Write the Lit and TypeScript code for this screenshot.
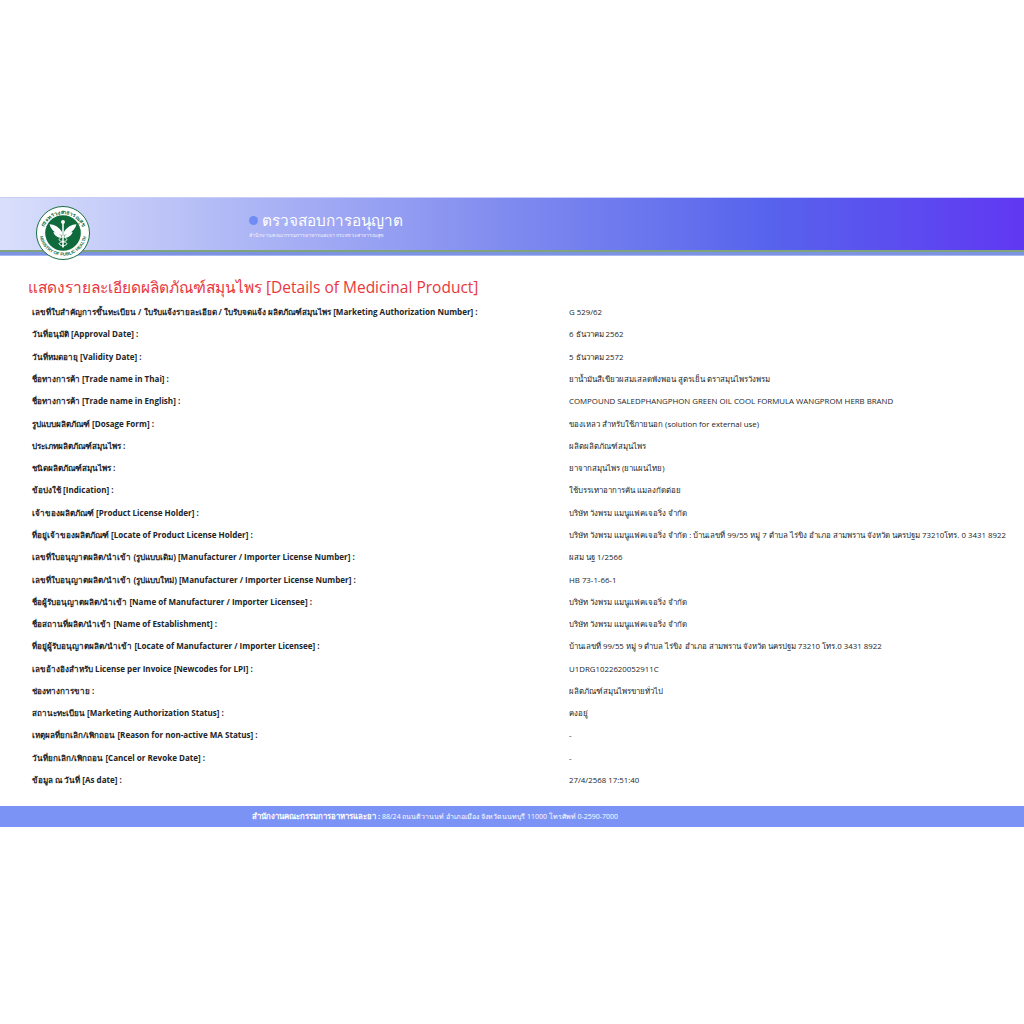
import { LitElement, html, css } from "lit";
import { customElement } from "lit/decorators.js";

const rows: [string, string][] = [
  ["เลขที่ใบสำคัญการขึ้นทะเบียน / ใบรับแจ้งรายละเอียด / ใบรับจดแจ้ง ผลิตภัณฑ์สมุนไพร [Marketing Authorization Number] :", "G 529/62"],
  ["วันที่อนุมัติ [Approval Date] :", "6 ธันวาคม 2562"],
  ["วันที่หมดอายุ [Validity Date] :", "5 ธันวาคม 2572"],
  ["ชื่อทางการค้า [Trade name in Thai] :", "ยาน้ำมันสีเขียวผสมเสลดพังพอน สูตรเย็น ตราสมุนไพรวังพรม"],
  ["ชื่อทางการค้า [Trade name in English] :", "COMPOUND SALEDPHANGPHON GREEN OIL COOL FORMULA WANGPROM HERB BRAND"],
  ["รูปแบบผลิตภัณฑ์ [Dosage Form] :", "ของเหลว สำหรับใช้ภายนอก (solution for external use)"],
  ["ประเภทผลิตภัณฑ์สมุนไพร :", "ผลิตผลิตภัณฑ์สมุนไพร"],
  ["ชนิดผลิตภัณฑ์สมุนไพร :", "ยาจากสมุนไพร (ยาแผนไทย)"],
  ["ข้อบ่งใช้ [Indication] :", "ใช้บรรเทาอาการคัน แมลงกัดต่อย"],
  ["เจ้าของผลิตภัณฑ์ [Product License Holder] :", "บริษัท วังพรม แมนูแฟคเจอริ่ง จำกัด"],
  ["ที่อยู่เจ้าของผลิตภัณฑ์ [Locate of Product License Holder] :", "บริษัท วังพรม แมนูแฟคเจอริ่ง จำกัด : บ้านเลขที่ 99/55 หมู่ 7 ตำบล ไร่ขิง อำเภอ สามพราน จังหวัด นครปฐม 73210โทร. 0 3431 8922"],
  ["เลขที่ใบอนุญาตผลิต/นำเข้า (รูปแบบเดิม) [Manufacturer / Importer License Number] :", "ผสม นฐ 1/2566"],
  ["เลขที่ใบอนุญาตผลิต/นำเข้า (รูปแบบใหม่) [Manufacturer / Importer License Number] :", "HB 73-1-66-1"],
  ["ชื่อผู้รับอนุญาตผลิต/นำเข้า [Name of Manufacturer / Importer Licensee] :", "บริษัท วังพรม แมนูแฟคเจอริ่ง จำกัด"],
  ["ชื่อสถานที่ผลิต/นำเข้า [Name of Establishment] :", "บริษัท วังพรม แมนูแฟคเจอริ่ง จำกัด"],
  ["ที่อยู่ผู้รับอนุญาตผลิต/นำเข้า [Locate of Manufacturer / Importer Licensee] :", "บ้านเลขที่ 99/55 หมู่ 9 ตำบล ไร่ขิง อำเภอ สามพราน จังหวัด นครปฐม 73210 โทร.0 3431 8922"],
  ["เลขอ้างอิงสำหรับ License per Invoice [Newcodes for LPI] :", "U1DRG1022620052911C"],
  ["ช่องทางการขาย :", "ผลิตภัณฑ์สมุนไพรขายทั่วไป"],
  ["สถานะทะเบียน [Marketing Authorization Status] :", "คงอยู่"],
  ["เหตุผลที่ยกเลิก/เพิกถอน [Reason for non-active MA Status] :", "-"],
  ["วันที่ยกเลิก/เพิกถอน [Cancel or Revoke Date] :", "-"],
  ["ข้อมูล ณ วันที่ [As date] :", "27/4/2568 17:51:40"],
];

@customElement("app-root")
export class AppRoot extends LitElement {
  static styles = css`
    :host {
      display: block;
      padding-top: 197px;
      background: #fff;
      font-family: "Open Sans", "Noto Sans", "Liberation Sans", sans-serif;
      color: #212529;
    }
    .banner {
      height: 52px;
      border-top: 1px solid #c9cef6;
      display: flex;
      align-items: flex-start;
      background: linear-gradient(90deg, #d9dffb 0%, #7f8aef 50%, #5763ec 75%, #6038f2 100%);
    }
    .logo {
      width: 54px;
      height: 54px;
      margin: 8px 0 0 36px;
      flex: none;
      position: relative;
      z-index: 1;
    }
    .brand {
      margin: 13px 0 0 159px;
      color: #fff;
    }
    .brand-title {
      display: flex;
      align-items: center;
      gap: 4px;
      font-size: 15.3px;
      line-height: 18px;
      font-weight: 500;
    }
    .dot {
      width: 9px;
      height: 9px;
      border-radius: 50%;
      background: #6f8cf5;
      flex: none;
    }
    .brand-sub {
      font-size: 5.25px;
      line-height: 8px;
      margin-top: 2px;
      opacity: 0.85;
    }
    .rule {
      height: 2px;
      background: #7fa37c;
    }
    .rule2 {
      height: 3px;
      background: #7b93e0;
    }
    .rule3 {
      height: 1px;
      background: #a9b8f5;
    }
    h1 {
      margin: 21px 0 0 28px;
      font-size: 15.5px;
      line-height: 20px;
      font-weight: 400;
      color: #e8383d;
    }
    .rows {
      margin-top: 4px;
      padding: 0 0 0 32px;
    }
    .row {
      display: grid;
      grid-template-columns: 537px 1fr;
      height: 22.29px;
      align-items: center;
      font-size: 7.85px;
      line-height: 12px;
      white-space: nowrap;
    }
    .k {
      font-weight: 700;
      font-size: 8.05px;
    }
    footer {
      margin-top: 15px;
      height: 21px;
      background: #7b93f5;
      color: #fff;
      font-size: 7px;
      line-height: 21px;
      padding-left: 252px;
      white-space: nowrap;
    }
    footer b {
      font-weight: 700;
      font-size: 7.75px;
    }
  `;

  render() {
    return html`
      <div class="banner">
        <svg class="logo" viewBox="0 0 56 56">
          <circle cx="28" cy="28" r="27.5" fill="#fff" stroke="#0f6b3c" stroke-width="1" />
          <circle cx="28" cy="28" r="18.5" fill="#0f6b3c" />
          <defs>
            <path id="arcTop" d="M6.5 30a21.5 21.5 0 0 1 43 0" />
            <path id="arcBot" d="M4 32a24.5 24.5 0 0 0 48 0" />
          </defs>
          <text font-size="5.6" font-weight="700" fill="#0f6b3c" font-family="'Noto Sans','Open Sans',sans-serif" text-anchor="middle">
            <textPath href="#arcTop" startOffset="50%">กระทรวงสาธารณสุข</textPath>
          </text>
          <text font-size="4.6" font-weight="700" fill="#0f6b3c" font-family="'Liberation Sans',sans-serif" text-anchor="middle">
            <textPath href="#arcBot" startOffset="50%">MINISTRY OF PUBLIC HEALTH</textPath>
          </text>
          <path d="M14 19c5 0 10 3 13 8v3c-5 0-11-4-13-11zM42 19c-5 0-10 3-13 8v3c5 0 11-4 13-11z" fill="#fff" />
          <path d="M18 27c3 0 6 2 8 4v2c-3 0-7-2-8-6zM38 27c-3 0-6 2-8 4v2c3 0 7-2 8-6z" fill="#fff" />
          <path d="M28 17v26" stroke="#fff" stroke-width="1.6" />
          <circle cx="28" cy="16.5" r="2" fill="#fff" />
          <path d="M24 30c4 2 8 3 8 5s-8 2-8 4 4 2 5 3M32 30c-4 2-8 3-8 5s8 2 8 4-4 2-5 3" fill="none" stroke="#fff" stroke-width="1" />
        </svg>
        <div class="brand">
          <div class="brand-title"><span class="dot"></span>ตรวจสอบการอนุญาต</div>
          <div class="brand-sub">สำนักงานคณะกรรมการอาหารและยา กระทรวงสาธารณสุข</div>
        </div>
      </div>
      <div class="rule"></div>
      <div class="rule2"></div>
      <div class="rule3"></div>
      <h1>แสดงรายละเอียดผลิตภัณฑ์สมุนไพร [Details of Medicinal Product]</h1>
      <div class="rows">
        ${rows.map(
          ([k, v]) => html`<div class="row"><span class="k">${k}</span><span>${v}</span></div>`
        )}
      </div>
      <footer><b>สำนักงานคณะกรรมการอาหารและยา :</b> 88/24 ถนนติวานนท์ อำเภอเมือง จังหวัดนนทบุรี 11000 โทรศัพท์ 0-2590-7000</footer>
    `;
  }
}
